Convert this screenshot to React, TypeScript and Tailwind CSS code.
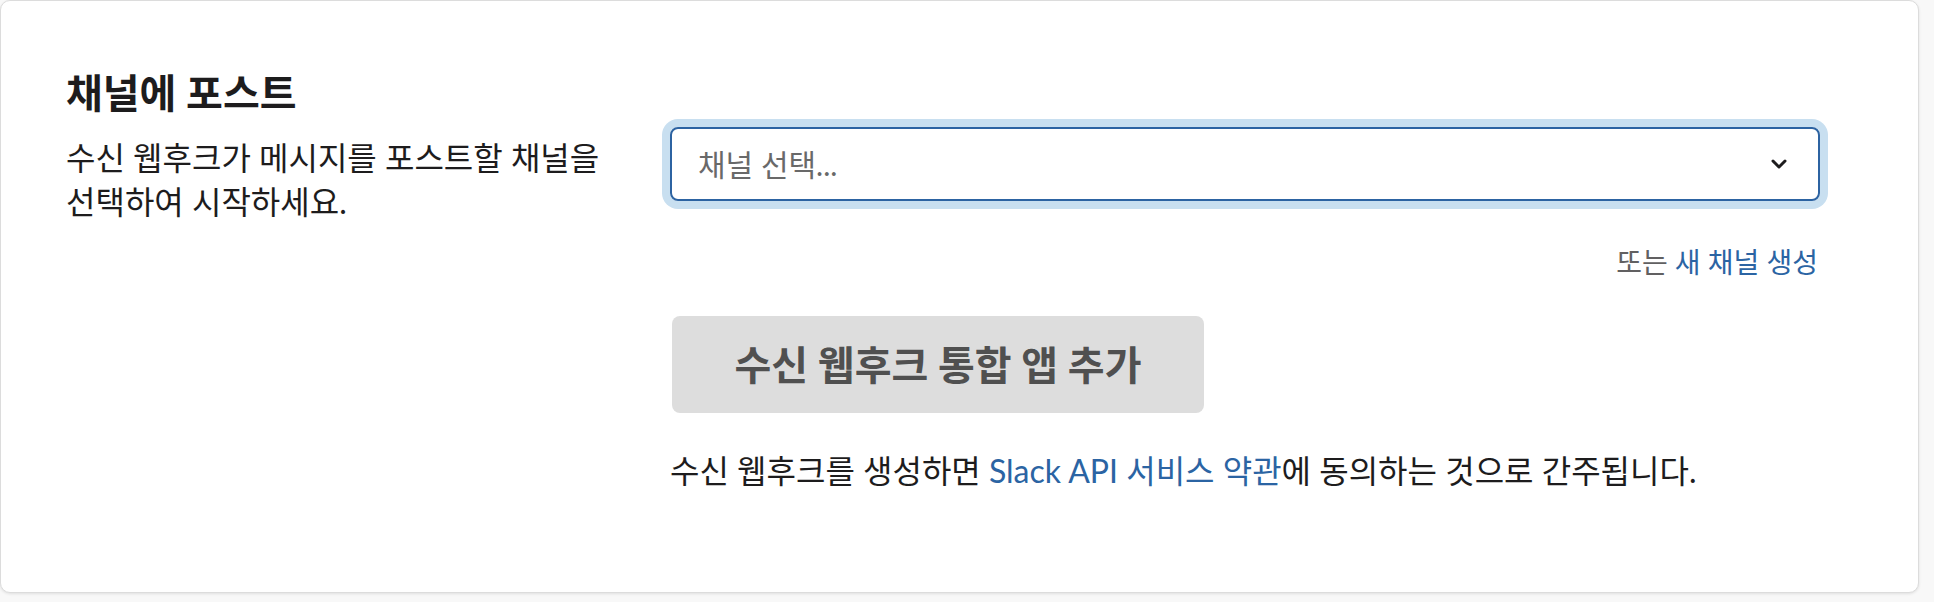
import React from 'react';

const font = "font-['Lato','Noto_Sans_CJK_KR',sans-serif]";

function Chevron() {
  return (
    <svg width="16" height="10" viewBox="0 0 16 10" fill="none">
      <path d="M2 2 L8 8 L14 2" stroke="#1d1c1d" strokeWidth="3" strokeLinecap="round" strokeLinejoin="round" />
    </svg>
  );
}

export default function App() {
  return (
    <div className={`w-[1934px] h-[602px] bg-[#f8f8f8] ${font}`}>
      <div className="w-[1919px] h-[593px] bg-white rounded-[10px] border border-[#dcdcdc] shadow-[0_1px_3px_rgba(0,0,0,0.1)] flex pl-[65px] pt-[70px]">
        {/* Left: label */}
        <div className="w-[604px] shrink-0 pr-[40px]">
          <h3 className="text-[40px] leading-[44px] font-bold text-[#1d1c1d]">채널에 포스트</h3>
          <p className="mt-[21px] text-[32px] leading-[44px] text-[#1d1c1d] break-keep">
            수신 웹후크가 메시지를 포스트할 채널을 선택하여 시작하세요.
          </p>
        </div>

        {/* Right: form */}
        <div className="w-[1150px] shrink-0 pt-[56px] flex flex-col">
          <div
            role="combobox"
            className="h-[74px] rounded-[8px] border-2 border-[#2c63a2] shadow-[0_0_0_8px_#c8dff0] flex items-center justify-between pl-[26px] pr-[31px]"
          >
            <span className="text-[30px] text-[#696969]">채널 선택...</span>
            <Chevron />
          </div>

          <div className="mt-[43px] text-right text-[28px] leading-[36px] pr-[2px]">
            <span className="text-[#616061]">또는 </span>
            <a className="text-[#2b64a3]">새 채널 생성</a>
          </div>

          <button className="mt-[36px] ml-[2px] w-[532px] h-[97px] rounded-[8px] bg-[#dddddd] text-[40px] font-bold text-[#505050]">
            수신 웹후크 통합 앱 추가
          </button>

          <p className="mt-[36px] text-[32px] leading-[44px] text-[#1d1c1d]">
            수신 웹후크를 생성하면 <a className="text-[#2b64a3]">Slack API 서비스 약관</a>에 동의하는 것으로 간주됩니다.
          </p>
        </div>
      </div>
    </div>
  );
}
